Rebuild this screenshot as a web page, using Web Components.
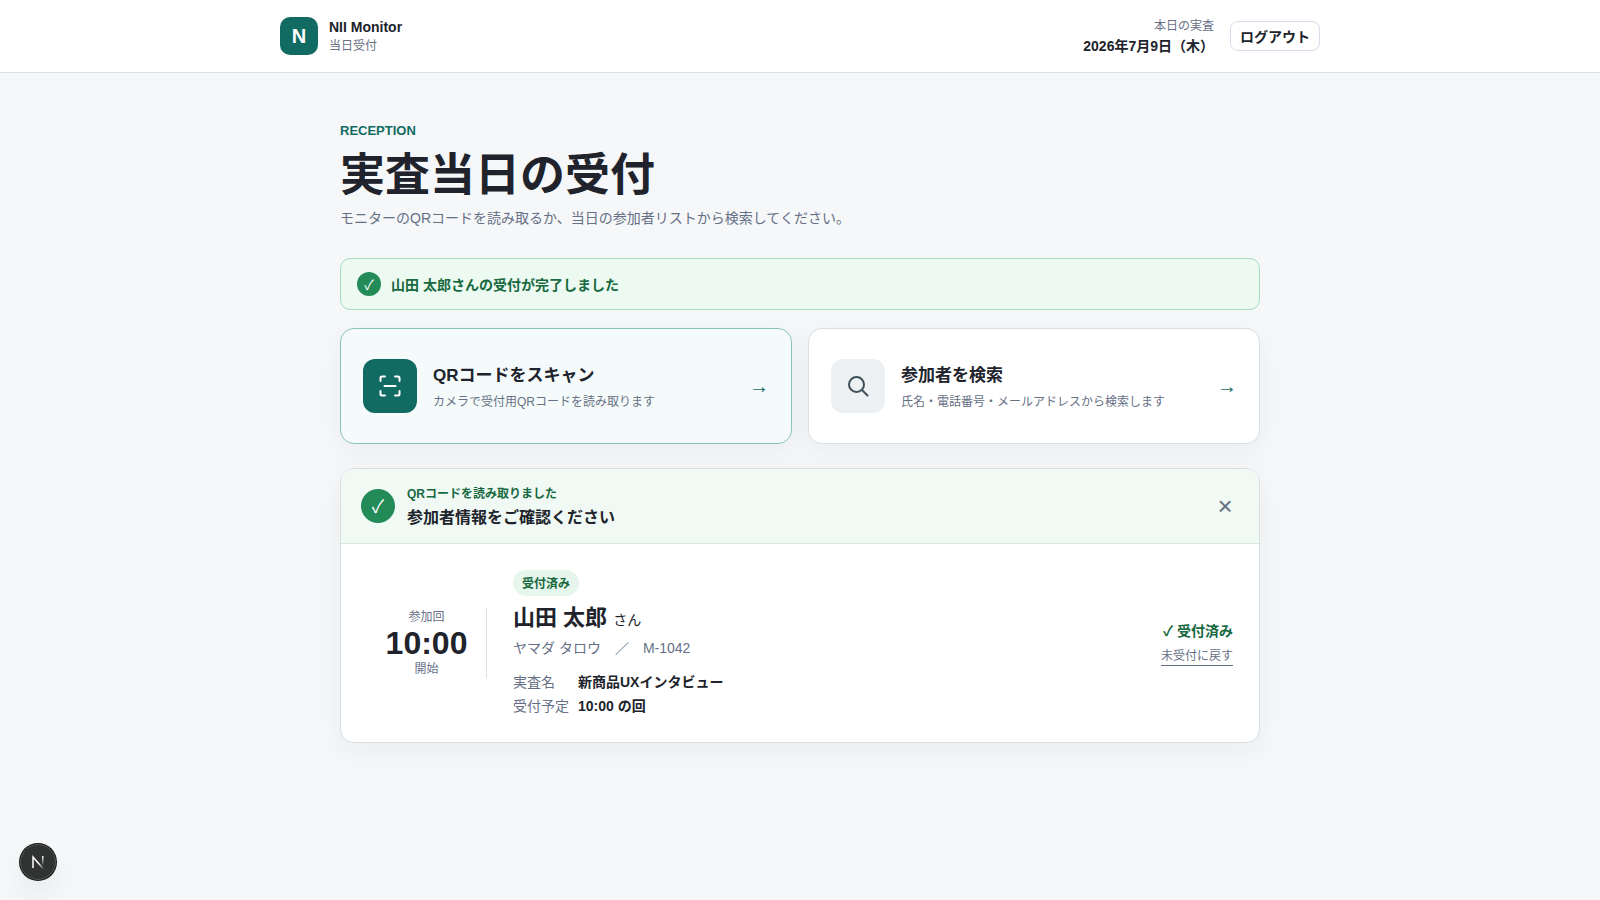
<!DOCTYPE html>
<html lang="ja">
<head>
<meta charset="utf-8">
<meta name="viewport" content="width=device-width, initial-scale=1">
<title>NII Monitor 当日受付</title>
<style>
  :root {
    --ink: #20232b;
    --muted: #667085;
    --brand: #126b63;
    --line: #d8e0e6;
    --ok: #238b57;
    --ok-text: #17693f;
    --shadow: 0 8px 28px rgba(32, 35, 43, 0.05);
  }

  body {
    margin: 0;
    min-height: 100vh;
    background: #f5f7f9;
    color: var(--ink);
    font-family: "Liberation Sans", "Noto Sans CJK JP", sans-serif;
    font-size: 14px;
    line-height: 20px;
  }
</style>
</head>
<body>
<reception-header></reception-header>
<reception-page></reception-page>
<dev-badge></dev-badge>

<script>
class ReceptionHeader extends HTMLElement {
    constructor() {
        super();
        this.attachShadow({ mode: 'open' });
    }

    connectedCallback() {
        this.shadowRoot.innerHTML = `
      <style>
        :host {
          display: block;
          background: #fff;
          border-bottom: 1px solid var(--line);
        }

        header {
          display: flex;
          align-items: center;
          justify-content: space-between;
          max-width: 1040px;
          min-height: 72px;
          margin: 0 auto;
        }

        .brand, .today {
          display: flex;
          align-items: center;
        }

        .brand { gap: 11px; }
        .today { gap: 16px; }

        .mark {
          display: grid;
          place-items: center;
          width: 38px;
          height: 38px;
          border-radius: 10px;
          background: var(--brand);
          color: #fff;
          font-size: 20px;
          font-weight: 700;
        }

        strong, span { display: block; }

        span {
          color: var(--muted);
          font-size: 12px;
          line-height: 18px;
        }

        .date { text-align: right; }
        .date span { line-height: 20px; }

        button {
          height: 30px;
          padding: 1px 9px 0;
          border: 1px solid #d9dce8;
          border-radius: 8px;
          background: #fff;
          color: inherit;
          font: inherit;
          font-weight: 700;
          cursor: pointer;
        }
      </style>

      <header>
        <div class="brand">
          <div class="mark">N</div>
          <div><strong>NII Monitor</strong><span>当日受付</span></div>
        </div>
        <div class="today">
          <div class="date"><span>本日の実査</span><strong>2026年7月9日（木）</strong></div>
          <button type="button">ログアウト</button>
        </div>
      </header>
    `;
    }
}

class CheckMark extends HTMLElement {
    constructor() {
        super();
        this.attachShadow({ mode: 'open' });
    }

    connectedCallback() {
        this.shadowRoot.innerHTML = `
      <style>
        :host {
          display: grid;
          place-items: center;
          flex: none;
          width: 24px;
          height: 24px;
          border-radius: 50%;
          background: var(--ok);
          color: #fff;
          font-weight: 400;
        }

        :host([large]) {
          width: 34px;
          height: 34px;
          font-size: 18px;
        }

        span { padding-top: 2px; }
      </style>
      <span>✓</span>
    `;
    }
}

class SuccessAlert extends HTMLElement {
    constructor() {
        super();
        this.attachShadow({ mode: 'open' });
    }

    connectedCallback() {
        this.shadowRoot.innerHTML = `
      <style>
        :host {
          display: flex;
          align-items: center;
          gap: 10px;
          padding: 13px 16px;
          border: 1px solid #a6dbbf;
          border-radius: 10px;
          background: #edfaf2;
          color: var(--ok-text);
          font-weight: 700;
        }

        .message { padding-top: 2px; }
      </style>
      <check-mark></check-mark>
      <span class="message"><slot></slot></span>
    `;
    }
}

class ActionCard extends HTMLElement {
    constructor() {
        super();
        this.attachShadow({ mode: 'open' });
    }

    connectedCallback() {
        this.shadowRoot.innerHTML = `
      <style>
        :host { display: block; }

        button {
          display: flex;
          align-items: center;
          gap: 16px;
          box-sizing: border-box;
          width: 100%;
          min-height: 116px;
          padding: 22px;
          border: 1px solid var(--line);
          border-radius: 14px;
          background: #fff;
          box-shadow: var(--shadow);
          color: inherit;
          font: inherit;
          text-align: left;
          cursor: pointer;
        }

        .icon {
          display: grid;
          place-items: center;
          flex: none;
          width: 54px;
          height: 54px;
          border-radius: 12px;
          background: #edf1f4;
          color: #40505b;
        }

        :host([primary]) button {
          border-color: #8bc4bb;
          background: #f5fbfb;
        }

        :host([primary]) .icon {
          background: var(--brand);
          color: #fff;
        }

        .copy {
          flex: 1;
          padding-top: 4px;
        }

        .title, .note { display: block; }

        .title {
          margin-bottom: 4px;
          font-size: 17px;
          font-weight: 700;
          line-height: 24px;
        }

        .note {
          color: var(--muted);
          font-size: 12px;
        }

        .arrow {
          color: var(--brand);
          font-size: 20px;
        }
      </style>

      <button type="button">
        <span class="icon"><slot name="icon"></slot></span>
        <span class="copy">
          <span class="title"><slot name="title"></slot></span>
          <span class="note"><slot name="note"></slot></span>
        </span>
        <span class="arrow">→</span>
      </button>
    `;
    }
}

class ParticipantCard extends HTMLElement {
    constructor() {
        super();
        this.attachShadow({ mode: 'open' });
    }

    connectedCallback() {
        this.shadowRoot.innerHTML = `
      <style>
        :host {
          display: block;
          overflow: hidden;
          border: 1px solid var(--line);
          border-radius: 14px;
          background: #fff;
          box-shadow: var(--shadow);
        }

        header {
          display: flex;
          align-items: center;
          gap: 12px;
          padding: 15px 20px 11px;
          border-bottom: 1px solid #d7e8df;
          background: #f0f9f4;
        }

        header check-mark, .close { margin-top: -4px; }

        .heading { flex: 1; }

        .heading p {
          margin: 0;
          color: var(--ok-text);
          font-size: 12px;
          font-weight: 700;
        }

        h2 {
          margin: 0;
          font-size: 16px;
          line-height: 28px;
        }

        button {
          padding: 0;
          border: 0;
          background: none;
          color: var(--muted);
          font: inherit;
          cursor: pointer;
        }

        .close {
          width: 28px;
          height: 28px;
          font-size: 26px;
          line-height: 28px;
        }

        .body {
          display: grid;
          grid-template-columns: 120px 1fr auto;
          align-items: center;
          gap: 26px;
          padding: 26px;
        }

        .time {
          border-right: 1px solid var(--line);
          color: var(--muted);
          font-size: 12px;
          line-height: 18px;
          text-align: center;
        }

        .time strong {
          display: block;
          color: var(--ink);
          font-size: 32px;
          line-height: 34px;
        }

        .badge {
          display: inline-block;
          padding: 4px 9px 2px;
          border-radius: 13px;
          background: #e7f6ed;
          color: var(--ok-text);
          font-size: 12px;
          font-weight: 700;
        }

        h3 {
          margin: 6px 0 2px;
          font-size: 22px;
          line-height: 32px;
        }

        h3 small {
          font-size: 14px;
          font-weight: 400;
        }

        .kana {
          margin: 0 0 14px;
          color: var(--muted);
        }

        dl {
          display: grid;
          grid-template-columns: auto 1fr;
          gap: 4px 9px;
          margin: 0;
        }

        dt { color: var(--muted); }

        dd {
          margin: 0;
          font-weight: 700;
        }

        .state {
          display: grid;
          justify-items: end;
          gap: 6px;
        }

        .state strong { color: var(--ok-text); }

        .undo {
          border-bottom: 1px solid var(--muted);
          font-size: 12px;
          line-height: 18px;
        }
      </style>

      <header>
        <check-mark large></check-mark>
        <div class="heading">
          <p>QRコードを読み取りました</p>
          <h2>参加者情報をご確認ください</h2>
        </div>
        <button class="close" type="button" aria-label="閉じる">×</button>
      </header>
      <div class="body">
        <div class="time">参加回<strong>10:00</strong>開始</div>
        <div class="info">
          <span class="badge">受付済み</span>
          <h3>山田 太郎 <small>さん</small></h3>
          <p class="kana">ヤマダ タロウ　／　M-1042</p>
          <dl>
            <dt>実査名</dt><dd>新商品UXインタビュー</dd>
            <dt>受付予定</dt><dd>10:00 の回</dd>
          </dl>
        </div>
        <div class="state">
          <strong>✓ 受付済み</strong>
          <button class="undo" type="button">未受付に戻す</button>
        </div>
      </div>
    `;
    }
}

class ReceptionPage extends HTMLElement {
    constructor() {
        super();
        this.attachShadow({ mode: 'open' });
    }

    connectedCallback() {
        this.shadowRoot.innerHTML = `
      <style>
        :host {
          display: block;
          max-width: 920px;
          margin: 0 auto;
          padding: 48px 20px;
        }

        .eyebrow {
          margin: 0;
          color: var(--brand);
          font-size: 13px;
          font-weight: 700;
        }

        h1 {
          margin: 2px 0 0;
          font-size: 45px;
          line-height: 66px;
        }

        .lead {
          margin: -1px 0 30px;
          color: var(--muted);
        }

        .actions {
          display: grid;
          grid-template-columns: 1fr 1fr;
          gap: 16px;
          margin: 18px 0 24px;
        }

        svg {
          display: block;
          fill: none;
          stroke: currentColor;
          stroke-width: 2;
          stroke-linecap: round;
          stroke-linejoin: round;
        }
      </style>

      <main>
        <p class="eyebrow">RECEPTION</p>
        <h1>実査当日の受付</h1>
        <p class="lead">モニターのQRコードを読み取るか、当日の参加者リストから検索してください。</p>
        <success-alert>山田 太郎さんの受付が完了しました</success-alert>
        <div class="actions">
          <action-card primary>
            <svg slot="icon" width="26" height="26" viewBox="0 0 26 26">
              <path d="M3.500 8V5A1.500 1.500 0 0 1 5 3.500h3M18 3.500h3A1.500 1.500 0 0 1 22.500 5v3M22.500 18v3a1.500 1.500 0 0 1-1.500 1.500h-3M8 22.500H5A1.500 1.500 0 0 1 3.500 21v-3M7.500 13h11"/>
            </svg>
            <span slot="title">QRコードをスキャン</span>
            <span slot="note">カメラで受付用QRコードを読み取ります</span>
          </action-card>
          <action-card>
            <svg slot="icon" width="26" height="26" viewBox="0 0 26 26">
              <circle cx="11.500" cy="11.500" r="7.500"/>
              <path d="m17 17 5.500 5.500"/>
            </svg>
            <span slot="title">参加者を検索</span>
            <span slot="note">氏名・電話番号・メールアドレスから検索します</span>
          </action-card>
        </div>
        <participant-card></participant-card>
      </main>
    `;
    }
}

class DevBadge extends HTMLElement {
    constructor() {
        super();
        this.attachShadow({ mode: 'open' });
    }

    connectedCallback() {
        // floats over the page in the bottom left corner
        this.shadowRoot.innerHTML = `
      <style>
        :host {
          position: fixed;
          left: 20px;
          bottom: 20px;
        }

        button {
          display: grid;
          place-items: center;
          width: 36px;
          height: 36px;
          padding: 0;
          border: 1px solid #535554;
          border-radius: 50%;
          background: #303331;
          box-shadow: 0 0 0 1px #171717, 0 16px 32px -8px rgba(0, 0, 0, 0.2);
          cursor: pointer;
        }
      </style>

      <button type="button" aria-label="Next.js">
        <svg width="14" height="14" viewBox="0 0 14 14" fill="none" stroke-width="1.500">
          <defs>
            <linearGradient id="stem" x1="0" y1="1" x2="0" y2="11" gradientUnits="userSpaceOnUse">
              <stop stop-color="#fff"/>
              <stop offset="1" stop-color="#fff" stop-opacity="0"/>
            </linearGradient>
            <linearGradient id="slant" x1="8" y1="8" x2="13" y2="14" gradientUnits="userSpaceOnUse">
              <stop stop-color="#fff"/>
              <stop offset="1" stop-color="#fff" stop-opacity="0"/>
            </linearGradient>
          </defs>
          <path d="M2 13V2l10.500 12" stroke="url(#slant)"/>
          <rect x="11" y="1" width="1.500" height="10" fill="url(#stem)"/>
        </svg>
      </button>
    `;
    }
}

customElements.define('check-mark', CheckMark);
customElements.define('success-alert', SuccessAlert);
customElements.define('action-card', ActionCard);
customElements.define('participant-card', ParticipantCard);
customElements.define('reception-header', ReceptionHeader);
customElements.define('reception-page', ReceptionPage);
customElements.define('dev-badge', DevBadge);
</script>
</body>
</html>
